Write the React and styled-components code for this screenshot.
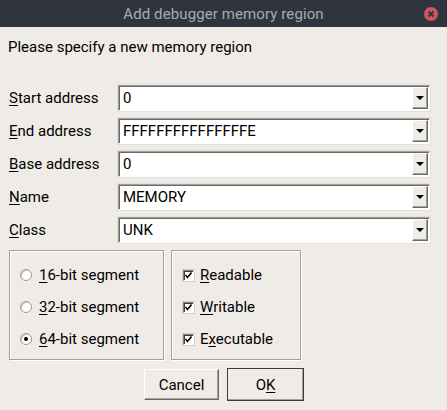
import React from 'react'
import styled, { createGlobalStyle } from 'styled-components'

const GlobalStyle = createGlobalStyle`
    html, body {
        margin: 0;
        padding: 0;
        background: #efebe7;
    }
    body {
        font-family: Roboto, "Liberation Sans", sans-serif;
        font-size: 15px;
        color: #000;
    }
`;

const Dialog = styled.div`
    width: 447px;
    height: 410px;
    display: flex;
    flex-direction: column;
    background: #efebe7;
    overflow: hidden;
`;

const TitleBar = styled.div`
    height: 27px;
    background: #2f343f;
    display: flex;
    align-items: center;
    justify-content: center;
    position: relative;
    color: #a5abb6;
    font-size: 15px;
    letter-spacing: 0.1px;
`;

const CloseBtn = styled.div`
    position: absolute;
    right: 9px;
    top: 7px;
    width: 14px;
    height: 14px;
    border-radius: 50%;
    background: #cc575d;
    display: flex;
    align-items: center;
    justify-content: center;
`;

const Body = styled.div`
    padding: 0 9px;
    display: flex;
    flex-direction: column;
`;

const Prompt = styled.div`
    margin-top: 11px;
    line-height: 18px;
    margin-left: -1px;
`;

const Form = styled.div`
    margin-top: 29px;
    display: grid;
    grid-template-columns: 109px 312px;
    grid-auto-rows: 26px;
    row-gap: 7px;
`;

const Label = styled.div`
    display: flex;
    align-items: center;
`;

const Key = styled.span`
    text-decoration: underline;
    text-underline-offset: 2px;
`;

const Combo = styled.div`
    display: flex;
    background: #fff;
    border-top: 1px solid #a0a0a0;
    border-left: 1px solid #a0a0a0;
    border-right: 1px solid #fff;
    border-bottom: 1px solid #fff;
    box-shadow: inset 1px 1px 0 #696969;
    outline: 1px solid #e3e0dc;
`;

const ComboText = styled.div`
    flex: 1;
    display: flex;
    align-items: center;
    padding-left: 4px;
`;

const DropBtn = styled.div`
    width: 14px;
    margin: 1px 1px 1px 0;
    background: #efebe7;
    border-top: 1px solid #fff;
    border-left: 1px solid #fff;
    border-right: 1px solid #696969;
    border-bottom: 1px solid #696969;
    box-shadow: inset -1px -1px 0 #a0a0a0;
    display: flex;
    align-items: center;
    justify-content: center;
`;

const Arrow = styled.div`
    width: 0;
    height: 0;
    border-left: 4px solid transparent;
    border-right: 4px solid transparent;
    border-top: 4px solid #000;
`;

const Groups = styled.div`
    margin-top: 7px;
    display: flex;
    gap: 7px;
`;

const Group = styled.div`
    width: ${p => p.$w}px;
    height: 110px;
    box-sizing: border-box;
    border: 1px solid #a0a0a0;
    box-shadow: inset 1px 1px 0 #fff, 1px 1px 0 #fff;
    display: flex;
    flex-direction: column;
    padding-top: 14px;
    gap: 12px;
`;

const Option = styled.div`
    height: 20px;
    display: flex;
    align-items: center;
    padding-left: ${p => p.$pad}px;
    gap: ${p => p.$gap}px;
`;

const Radio = styled.div`
    width: 10px;
    height: 10px;
    border-radius: 50%;
    background: #fff;
    border: 1px solid #9a9a9a;
    box-shadow: inset 1px 1px 0 #c8c8c8;
    display: flex;
    align-items: center;
    justify-content: center;
    &::after {
        content: '';
        width: 4px;
        height: 4px;
        border-radius: 50%;
        background: ${p => (p.$on ? '#000' : 'transparent')};
    }
`;

const Check = styled.div`
    width: 9px;
    height: 9px;
    background: #fff;
    border-top: 1px solid #808080;
    border-left: 1px solid #808080;
    border-right: 1px solid #fff;
    border-bottom: 1px solid #fff;
    box-shadow: inset 1px 1px 0 #404040, 0 0 0 1px #d4d0c8;
    display: flex;
    align-items: center;
    justify-content: center;
`;

const Buttons = styled.div`
    margin-top: 8px;
    display: flex;
    justify-content: center;
    gap: 8px;
    padding-left: 1px;
`;

const Button = styled.div`
    box-sizing: border-box;
    width: ${p => (p.$default ? 77 : 75)}px;
    height: ${p => (p.$default ? 33 : 31)}px;
    margin-top: ${p => (p.$default ? 0 : 1)}px;
    background: #efebe7;
    border-top: 1px solid #fff;
    border-left: 1px solid #fff;
    border-right: 1px solid #696969;
    border-bottom: 1px solid #696969;
    box-shadow: inset -1px -1px 0 #a0a0a0;
    outline: ${p => (p.$default ? '1px solid #3c3c3c' : 'none')};
    outline-offset: -1px;
    display: flex;
    align-items: center;
    justify-content: center;
`;

const rows = [
    { key: 'S', rest: 'tart address', value: '0' },
    { key: 'E', rest: 'nd address', value: 'FFFFFFFFFFFFFFFE' },
    { key: 'B', rest: 'ase address', value: '0' },
    { key: 'N', rest: 'ame', value: 'MEMORY' },
    { key: 'C', rest: 'lass', value: 'UNK' },
]

const segments = [
    { key: '1', rest: '6-bit segment', on: false },
    { key: '3', rest: '2-bit segment', on: false },
    { key: '6', rest: '4-bit segment', on: true },
]

const perms = [
    { pre: '', key: 'R', rest: 'eadable' },
    { pre: '', key: 'W', rest: 'ritable' },
    { pre: 'E', key: 'x', rest: 'ecutable' },
]

function Tick() {
    return (
        <svg width="9" height="9" viewBox="0 0 9 9">
            <path d="M1.5 4 L3.5 6.5 L7.5 1.5" stroke="#000" strokeWidth="1.6" fill="none" />
        </svg>
    )
}

export default function App() {
    return (
        <>
            <GlobalStyle />
            <Dialog>
                <TitleBar>
                    Add debugger memory region
                    <CloseBtn>
                        <svg width="8" height="8" viewBox="0 0 8 8">
                            <path d="M1.5 1.5 L6.5 6.5 M6.5 1.5 L1.5 6.5" stroke="#2f343f" strokeWidth="1.8" />
                        </svg>
                    </CloseBtn>
                </TitleBar>
                <Body>
                    <Prompt>Please specify a new memory region</Prompt>
                    <Form>
                        {rows.map(r => (
                            <React.Fragment key={r.rest}>
                                <Label><Key>{r.key}</Key>{r.rest}</Label>
                                <Combo>
                                    <ComboText>{r.value}</ComboText>
                                    <DropBtn><Arrow /></DropBtn>
                                </Combo>
                            </React.Fragment>
                        ))}
                    </Form>
                    <Groups>
                        <Group $w={155}>
                            {segments.map(s => (
                                <Option key={s.rest} $pad={10} $gap={7}>
                                    <Radio $on={s.on} />
                                    <span><Key>{s.key}</Key>{s.rest}</span>
                                </Option>
                            ))}
                        </Group>
                        <Group $w={130}>
                            {perms.map(p => (
                                <Option key={p.rest} $pad={11} $gap={6}>
                                    <Check><Tick /></Check>
                                    <span>{p.pre}<Key>{p.key}</Key>{p.rest}</span>
                                </Option>
                            ))}
                        </Group>
                    </Groups>
                    <Buttons>
                        <Button>Cancel</Button>
                        <Button $default>O<Key>K</Key></Button>
                    </Buttons>
                </Body>
            </Dialog>
        </>
    )
}
